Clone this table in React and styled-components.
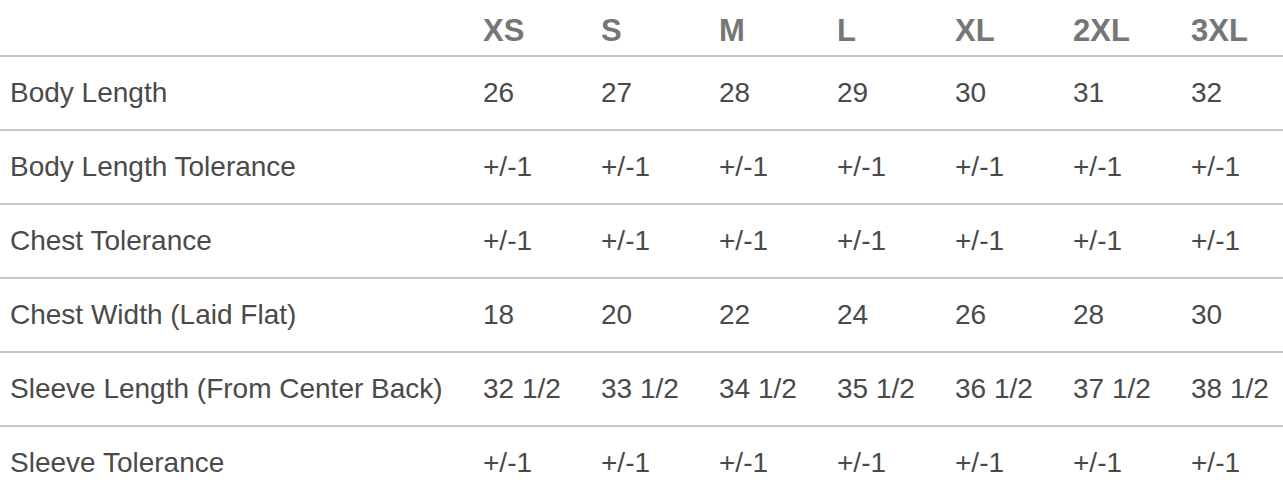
import React from 'react';
import styled, { createGlobalStyle } from 'styled-components';

const GlobalStyle = createGlobalStyle`
	html, body {
		margin: 0;
		padding: 0;
		background: #fff;
		overflow: hidden;
	}
	body {
		font-family: "Liberation Sans", Arial, Helvetica, sans-serif;
	}
`;

const sizes = ['XS', 'S', 'M', 'L', 'XL', '2XL', '3XL'];

const rows = [
	{ label: 'Body Length', values: ['26', '27', '28', '29', '30', '31', '32'] },
	{ label: 'Body Length Tolerance', values: Array(7).fill('+/-1') },
	{ label: 'Chest Tolerance', values: Array(7).fill('+/-1') },
	{ label: 'Chest Width (Laid Flat)', values: ['18', '20', '22', '24', '26', '28', '30'] },
	{
		label: 'Sleeve Length (From Center Back)',
		values: ['32 1/2', '33 1/2', '34 1/2', '35 1/2', '36 1/2', '37 1/2', '38 1/2']
	},
	{ label: 'Sleeve Tolerance', values: Array(7).fill('+/-1') }
];

const SizeTable = styled.div`
	width: 1299px;
	display: flex;
	flex-direction: column;
`;

const Row = styled.div`
	display: grid;
	grid-template-columns: 473px repeat(7, 118px);
	box-sizing: border-box;
	height: ${props => (props.head ? '57px' : '74px')};
	align-items: ${props => (props.head ? 'start' : 'center')};
	padding-top: ${props => (props.head ? '15px' : '0')};
	border-bottom: 2px solid #c6c6c6;
`;

const Cell = styled.div`
	padding-left: 10px;
	white-space: nowrap;
	font-size: ${props => (props.head ? '31px' : '28px')};
	line-height: ${props => (props.head ? '31px' : '28px')};
	font-weight: ${props => (props.head ? 700 : 400)};
	color: ${props => (props.head ? '#767676' : '#4a4a4a')};
`;

const App = () => (
	<>
		<GlobalStyle />
		<SizeTable>
			<Row head>
				<Cell head />
				{sizes.map(size => (
					<Cell head key={size}>
						{size}
					</Cell>
				))}
			</Row>
			{rows.map(row => (
				<Row key={row.label}>
					<Cell>{row.label}</Cell>
					{row.values.map((value, i) => (
						<Cell key={i}>{value}</Cell>
					))}
				</Row>
			))}
		</SizeTable>
	</>
);

export default App;
